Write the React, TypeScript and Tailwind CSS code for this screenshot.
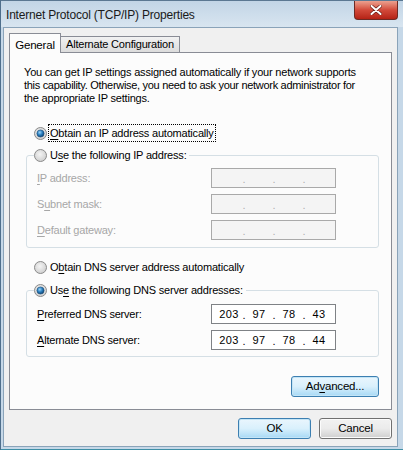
import React from "react";

const FONT = "font-['Liberation_Sans',Arial,sans-serif]";

function Radio({ checked }: { checked?: boolean }) {
  return (
    <svg width="13" height="13" viewBox="0 0 13 13" className="shrink-0">
      <defs>
        <radialGradient id="rfill" cx="0.45" cy="0.4" r="0.7">
          <stop offset="0" stopColor="#f4f4f4" />
          <stop offset="1" stopColor="#c9c9c9" />
        </radialGradient>
        <radialGradient id="rdot" cx="0.4" cy="0.35" r="0.7">
          <stop offset="0" stopColor="#9ad4f8" />
          <stop offset="0.5" stopColor="#2a7fc0" />
          <stop offset="1" stopColor="#0b3c68" />
        </radialGradient>
      </defs>
      <circle cx="6.5" cy="6.5" r="6" fill="url(#rfill)" stroke="#8b8b8b" strokeWidth="1" />
      {checked && <circle cx="6.5" cy="6.5" r="3.6" fill="url(#rdot)" stroke="#1b4d78" strokeWidth="0.6" />}
    </svg>
  );
}

function U({ children }: { children: React.ReactNode }) {
  return <span className="underline underline-offset-2">{children}</span>;
}

function IpBox({ value, disabled }: { value?: string[]; disabled?: boolean }) {
  const parts = value ?? ["", "", "", ""];
  return (
    <div
      className={`w-[125px] h-[20px] flex items-center pl-[4px] border ${
        disabled ? "bg-[#f4f4f4] border-[#a9a9a9] text-[#b0b0b0]" : "bg-white border-[#7f8286] text-black"
      }`}
    >
      {parts.map((p, i) => (
        <React.Fragment key={i}>
          <span className="w-[26px] text-center text-[11px] tracking-[0.3px]">{p}</span>
          {i < 3 && <span className="w-[4px] text-center text-[11px] leading-none pt-[3px]">.</span>}
        </React.Fragment>
      ))}
    </div>
  );
}

function Row({ label, value, disabled }: { label: React.ReactNode; value?: string[]; disabled?: boolean }) {
  return (
    <div className="flex items-center h-[20px]">
      <span className={`w-[174px] ${disabled ? "text-[#a7a7a7]" : "text-black"}`}>{label}</span>
      <IpBox value={value} disabled={disabled} />
    </div>
  );
}

function Button({ children, highlighted, w }: { children: React.ReactNode; highlighted?: boolean; w: string }) {
  return (
    <div
      className={`${w} h-[21px] rounded-[3px] border flex items-center justify-center text-[11.5px] ${
        highlighted
          ? "border-[#3c7fb1] bg-gradient-to-b from-[#eaf6fd] via-[#d9f0fc] to-[#a7d9f5] shadow-[inset_0_0_0_1px_#c4e5f6]"
          : "border-[#707070] bg-gradient-to-b from-[#f2f2f2] via-[#ebebeb] to-[#cfcfcf] shadow-[inset_0_0_0_1px_#fcfcfc]"
      }`}
    >
      {children}
    </div>
  );
}

export default function App() {
  return (
    <div className={`w-[403px] h-[450px] flex flex-col bg-[#c6d8e8] border-l border-[#4f6f8c] ${FONT} text-[11px] tracking-[-0.2px] text-black`}>
      {/* Title bar */}
      <div className="h-[27px] flex items-start bg-gradient-to-b from-[#c2d5e6] to-[#d8e5f0] border-t border-[#5b7892]">
        <span className="ml-[5px] mt-[5px] text-[12px] text-[#1a1a1a] tracking-[-0.2px]">Internet Protocol (TCP/IP) Properties</span>
        <div className="ml-auto mr-[5px] w-[44px] h-[19px] rounded-b-[4px] border border-t-0 border-[#6d2a24] bg-gradient-to-b from-[#eba08f] via-[#d2493a] to-[#b52114] flex items-center justify-center">
          <svg width="12" height="10" viewBox="0 0 12 10">
            <path d="M1.5 1 L10.5 9 M10.5 1 L1.5 9" stroke="#6a1d16" strokeWidth="3.4" strokeLinecap="round" />
            <path d="M1.5 1 L10.5 9 M10.5 1 L1.5 9" stroke="#ffffff" strokeWidth="2" strokeLinecap="round" />
          </svg>
        </div>
      </div>

      {/* Client area */}
      <div className="flex-1 ml-[2px] mr-[5px] mb-[2px] bg-[#f0f0f0] border border-[#8aa3b9] px-[5px] flex flex-col">
        {/* Tabs */}
        <div className="flex items-end h-[24px]">
          <div className="w-[52px] h-[20px] bg-[#fcfcfc] border border-b-0 border-[#898c95] flex items-start justify-center pt-[3px] text-[11.5px] relative top-[1px] z-10">
            General
          </div>
          <div className="h-[16px] px-[5px] bg-gradient-to-b from-[#f2f2f2] to-[#dcdcdc] border border-l-0 border-b-0 border-[#898c95] flex items-center text-[11px]">
            Alternate Configuration
          </div>
        </div>

        {/* Panel */}
        <div className="h-[358px] bg-[#fcfcfc] border border-[#898c95] pl-[16px] flex flex-col">
          <p className="ml-[-2px] mt-[13px] leading-[13px] w-[370px] whitespace-nowrap">
            You can get IP settings assigned automatically if your network supports
            <br />
            <span className="tracking-[-0.3px]">this capability. Otherwise, you need to ask your network administrator for</span>
            <br />
            the appropriate IP settings.
          </p>

          <div className="flex items-center h-[16px] mt-[20px] ml-[8px] gap-[2px]">
            <Radio checked />
            <span className="outline outline-1 outline-dotted outline-black px-[1px]">
              <U>O</U>btain an IP address automatically
            </span>
          </div>

          <fieldset className="w-[353px] mt-[6px] border border-[#d5dfe5] rounded-[3px] pl-[10px] pt-[5px] pb-[7px] flex flex-col gap-[6px]">
            <legend className="ml-[-3px] pr-[3px] h-[16px]">
              <span className="flex items-center gap-[3px]">
                <Radio />
                <span>U<U>s</U>e the following IP address:</span>
              </span>
            </legend>
            <Row disabled label={<><U>I</U>P address:</>} />
            <Row disabled label={<>S<U>u</U>bnet mask:</>} />
            <Row disabled label={<><U>D</U>efault gateway:</>} />
          </fieldset>

          <div className="flex items-center h-[16px] mt-[11px] ml-[8px] gap-[3px]">
            <Radio />
            <span>O<U>b</U>tain DNS server address automatically</span>
          </div>

          <fieldset className="w-[353px] mt-[7px] border border-[#d5dfe5] rounded-[3px] pl-[10px] pt-[6px] pb-[6px] flex flex-col gap-[6px]">
            <legend className="ml-[-3px] pr-[3px] h-[16px]">
              <span className="flex items-center gap-[3px]">
                <Radio checked />
                <span>Us<U>e</U> the following DNS server addresses:</span>
              </span>
            </legend>
            <Row label={<><U>P</U>referred DNS server:</>} value={["203", "97", "78", "43"]} />
            <Row label={<><U>A</U>lternate DNS server:</>} value={["203", "97", "78", "44"]} />
          </fieldset>

          <div className="w-[353px] flex justify-end mt-[19px]">
            <Button w="w-[88px]" highlighted>
              Ad<U>v</U>anced...
            </Button>
          </div>
        </div>

        {/* Footer buttons */}
        <div className="flex justify-end gap-[8px] mt-[8px]">
          <Button w="w-[73px]" highlighted>OK</Button>
          <Button w="w-[73px]">Cancel</Button>
        </div>
      </div>
      <div className="h-[1px] bg-[#3f8fa6]" />
    </div>
  );
}
